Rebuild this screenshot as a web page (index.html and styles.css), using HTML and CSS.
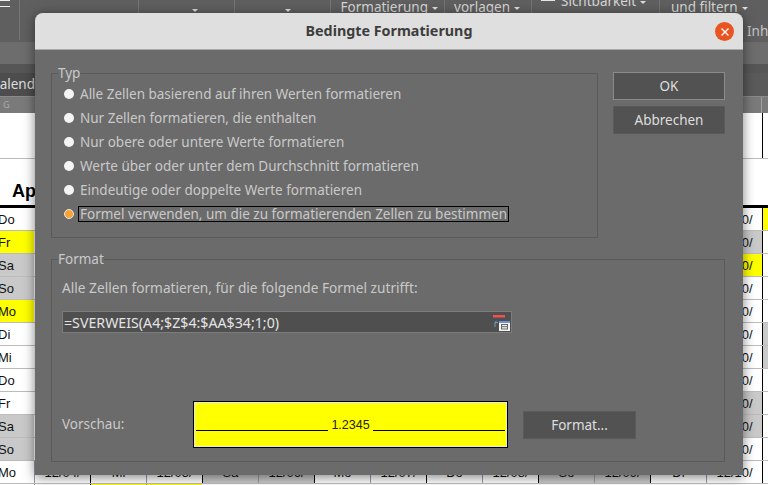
FILE: index.html
```html
<!DOCTYPE html>
<html lang="de">
<head>
<meta charset="utf-8">
<title>Bedingte Formatierung</title>
<link rel="stylesheet" href="styles.css">
</head>
<body>
<div class="app">
  <div class="ribbon">
    <div class="rb rb-a"><span class="burger"></span></div>
    <div class="rb rb-b"></div>
    <div class="rb rb-c"><i class="caret"></i></div>
    <div class="rb rb-d"><i class="caret"></i></div>
    <div class="rb rb-e"><span class="rb-label">Formatierung<i class="caret"></i></span></div>
    <div class="rb rb-f"><span class="rb-label">vorlagen<i class="caret"></i></span></div>
    <div class="rb rb-g"><span class="rb-label rb-clip"><svg class="eye" width="18" height="8" viewBox="0 0 18 8"><path d="M2 5.500h14M4 0l2 4h6l2-4M7 1.500h4" stroke="#e4e4e4" stroke-width="1" fill="none"/><rect x="6" y="0" width="6" height="3" fill="#7a86c8"/></svg>Sichtbarkeit<i class="caret"></i></span></div>
    <div class="rb rb-h"><span class="rb-label">und filtern<i class="caret"></i></span><span class="rb-inh">Inh</span></div>
  </div>
  <div class="bar-light"></div>
  <div class="bar-dark"></div>
  <div class="tabs"><span class="tab">Kalend</span></div>
  <div class="colhead"><span class="colhead-a">G</span><span class="colhead-b"></span></div>
  <div class="sheet-top">
    <div class="blank"><span class="c-end"></span></div>
    <div class="title-row"><span class="month">Apr</span><span class="c-end"></span></div>
  </div>
  <div class="row"><span class="day">Do</span><span class="gap"></span><span class="cell">12/10/</span><span class="tail y"></span></div>
  <div class="row"><span class="day y">Fr</span><span class="gap"></span><span class="cell g">12/10/</span><span class="tail"></span></div>
  <div class="row"><span class="day g">Sa</span><span class="gap"></span><span class="cell y">12/10/</span><span class="tail"></span></div>
  <div class="row"><span class="day g">So</span><span class="gap"></span><span class="cell">12/10/</span><span class="tail"></span></div>
  <div class="row"><span class="day y">Mo</span><span class="gap"></span><span class="cell">12/10/</span><span class="tail"></span></div>
  <div class="row"><span class="day">Di</span><span class="gap"></span><span class="cell">12/10/</span><span class="tail g"></span></div>
  <div class="row"><span class="day">Mi</span><span class="gap"></span><span class="cell">12/10/</span><span class="tail g"></span></div>
  <div class="row"><span class="day">Do</span><span class="gap"></span><span class="cell">12/10/</span><span class="tail"></span></div>
  <div class="row"><span class="day">Fr</span><span class="gap"></span><span class="cell g">12/10/</span><span class="tail"></span></div>
  <div class="row"><span class="day g">Sa</span><span class="gap"></span><span class="cell g">12/10/</span><span class="tail"></span></div>
  <div class="row"><span class="day g">So</span><span class="gap"></span><span class="cell">12/10/</span><span class="tail"></span></div>
  <div class="row"><span class="day">Mo</span>
    <span class="cell">12/04/</span><span class="cell thin">Mi</span>
    <span class="cell">12/05/</span><span class="cell thin g">Sa</span>
    <span class="cell g">12/06/</span><span class="cell thin">Mo</span>
    <span class="cell">12/07/</span><span class="cell thin">Do</span>
    <span class="cell">12/08/</span><span class="cell thin g">So</span>
    <span class="cell g">12/09/</span><span class="cell thin">Di</span>
    <span class="cell">12/10/</span><span class="tail"></span></div>
  <div class="row"><span class="day"></span><span class="cell"></span><span class="cell thin y"></span><span class="cell y"></span></div>
</div>

<div class="dialog">
  <header class="titlebar">
    <h1 class="title">Bedingte Formatierung</h1>
    <span class="close"><svg width="10" height="10" viewBox="0 0 10 10"><path d="M1.5 1.5l7 7M8.500 1.500l-7 7" stroke="#fff" stroke-width="1.400" fill="none"/></svg></span>
  </header>
  <div class="content">
    <div class="top">
      <fieldset class="group group-type">
        <legend class="legend">Typ</legend>
        <label class="radio"><span class="dot"></span><span class="r-text">Alle Zellen basierend auf ihren Werten formatieren</span></label>
        <label class="radio"><span class="dot"></span><span class="r-text">Nur Zellen formatieren, die enthalten</span></label>
        <label class="radio"><span class="dot"></span><span class="r-text">Nur obere oder untere Werte formatieren</span></label>
        <label class="radio"><span class="dot"></span><span class="r-text">Werte über oder unter dem Durchschnitt formatieren</span></label>
        <label class="radio"><span class="dot"></span><span class="r-text">Eindeutige oder doppelte Werte formatieren</span></label>
        <label class="radio"><span class="dot on"></span><span class="r-text focus">Formel verwenden, um die zu formatierenden Zellen zu bestimmen</span></label>
      </fieldset>
      <div class="actions">
        <button class="btn btn-ok">OK</button>
        <button class="btn">Abbrechen</button>
      </div>
    </div>
    <fieldset class="group group-format">
      <legend class="legend">Format</legend>
      <p class="hint">Alle Zellen formatieren, für die folgende Formel zutrifft:</p>
      <div class="formula"><span class="formula-text">=SVERWEIS(A4;$Z$4:$AA$34;1;0)</span>
        <svg class="ref" width="20" height="19" viewBox="0 0 20 19">
          <rect x="2" y="2" width="12" height="2.500" fill="#ef5350"/>
          <path d="M4 14V9.500h3M5.500 8L3.800 9.600" stroke="#5fa8b8" stroke-width="1" fill="none"/>
          <rect x="8" y="8" width="11" height="10" fill="#f4f4f4"/>
          <rect x="8" y="8" width="11" height="2" fill="#6f8fd8"/>
          <rect x="10.500" y="11.500" width="6" height="4.500" fill="none" stroke="#666" stroke-width="1"/>
          <path d="M10.500 13.700h6" stroke="#666" stroke-width="1"/>
        </svg>
      </div>
      <div class="preview-row">
        <span class="preview-label">Vorschau:</span>
        <div class="preview"><span class="pline"></span><span class="pnum">1.2345</span><span class="pline"></span></div>
        <button class="btn btn-format">Format...</button>
      </div>
    </fieldset>
  </div>
</div>
</body>
</html>
```
FILE: styles.css
```css
* { box-sizing: border-box; }
html, body { margin: 0; padding: 0; }
body {
  width: 768px;
  height: 485px;
  overflow: hidden;
  position: relative;
  background: #fff;
  font-family: "Noto Sans", sans-serif;
}

/* background application */
.app { width: 768px; height: 485px; overflow: hidden; display: flex; flex-direction: column; }
.ribbon { height: 43px; flex: none; background: #5f5f5f; display: flex; border-bottom: 1px solid #6d6d6d; }
.rb { position: relative; border-right: 1px solid #757575; height: 40px; flex: none; color: #d6d6d6; font-size: 13.500px; }
.rb-a { width: 20px; }
.rb-b { width: 119px; }
.rb-c { width: 96px; }
.rb-d { width: 96px; }
.rb-e { width: 114px; }
.rb-f { width: 87px; }
.rb-g { width: 128px; }
.rb-h { width: 109px; border-right: 0; }
.burger { display: block; width: 10px; height: 7px; border-top: 1px solid #eee; border-bottom: 1px solid #eee; }
.caret { display: inline-block; border: 3px solid transparent; border-top: 3px solid #ddd; border-bottom: 0; margin-left: 4px; vertical-align: 2px; }
.rb-c .caret { margin: 4px 0 0 53px; }
.rb-d .caret { margin: 4px 0 0 50px; }
.rb-label { display: block; text-align: right; padding-right: 6px; margin-top: -2px; white-space: nowrap; line-height: 18px; }
.rb-f .rb-label { padding-right: 11px; }
.rb-clip { margin-top: -8px; padding-right: 16px; text-align: left; padding-left: 7px; }
.eye { margin-right: 4px; vertical-align: 3px; }
.rb-h .rb-label { text-align: left; padding: 0 0 0 11px; }
.rb-inh { position: absolute; left: 87px; top: 24px; line-height: 14px; color: #c4c4c4; }
.bar-light { height: 21px; background: #6d6d6d; flex: none; }
.bar-dark { height: 9px; background: #565656; flex: none; }
.tabs { height: 23px; background: #5a5a5a; flex: none; }
.tab { display: flex; justify-content: flex-end; width: 35px; height: 23px; background: #4d4d4d; color: #ddd; font-size: 13.500px; line-height: 23px; overflow: hidden; white-space: nowrap; }
.colhead { height: 17px; background: #7a7a7a; flex: none; display: flex; border-top: 1px solid #8a8a8a; }
.colhead-a { width: 762px; color: #aaa; font-size: 9px; line-height: 15px; padding-left: 3px; border-right: 1px solid #a0a0a0; }
.colhead-b { flex: 1; }
.sheet-top { height: 95px; flex: none; display: flex; flex-direction: column; border-bottom: 3px solid #000; }
.blank { height: 46px; border-bottom: 1px solid #bbb; display: flex; justify-content: flex-end; }
.c-end { width: 6px; border-left: 1px solid #000; }
.title-row { flex: 1; display: flex; justify-content: space-between; padding-left: 12px; align-items: center; }
.month { font: bold 18px/22px "Liberation Sans", sans-serif; color: #000; margin-top: 18px; }

.row { height: 23px; flex: none; display: flex; border-bottom: 1px solid #bcbcbc; font: 13px/23px "Liberation Sans", sans-serif; color: #111; }
.day { width: 34px; flex: none; text-indent: -2px; }
.gap { width: 672px; flex: none; }
.cell { width: 56px; flex: none; text-align: center; }
.day + .cell, .cell:not(.thin) { border-left: 1px solid #000; }
.cell.thin { border-left: 1px solid #9a9a9a; }
.day + .cell { border-left-color: #9a9a9a; }
.cell:not(.thin) { border-left-color: #9a9a9a; }
.cell.thin { border-left-color: #000; }
.cell:not(.thin) + .cell.thin { border-left-color: #000; }
.tail { flex: 1; border-left: 1px solid #000; }
.y { background: #ffff00; }
.g { background: #c9c9c9; }

/* dialog */
.dialog {
  position: absolute;
  left: 35px;
  top: 13px;
  width: 708px;
  height: 462px;
  background: #6b6b6b;
  border-radius: 8px 8px 0 0;
  box-shadow: 0 2px 12px rgba(0, 0, 0, .5);
  color: #c9c9c9;
  display: flex;
  flex-direction: column;
}
.titlebar {
  height: 37px;
  flex: none;
  background: #dfdfdf;
  border-bottom: 1px solid #a9a9a9;
  border-radius: 8px 8px 0 0;
  display: flex;
  align-items: center;
  justify-content: center;
  position: relative;
}
.title { margin: 0; font-size: 14.300px; font-weight: 700; color: #3d3d3d; line-height: 36px; }
.close {
  position: absolute;
  right: 9px;
  top: 9px;
  width: 19px;
  height: 19px;
  border-radius: 50%;
  background: #e95420;
  display: flex;
  align-items: center;
  justify-content: center;
}
.content { padding: 15px 18px 0 16px; display: flex; flex-direction: column; flex: 1; }
.top { display: flex; gap: 15px; height: 173px; flex: none; }
.group { margin: 0; padding: 0; border: 1px solid #5a5a5a; min-width: 0; }
.legend { padding: 0; margin-left: 6px; font-size: 13.500px; line-height: 16px; color: #c9c9c9; }
.group-type { width: 547px; padding: 0 0 0 12px; display: flex; flex-direction: column; }
.group-type .legend { margin-left: -6px; }
.radio { height: 24px; display: flex; align-items: center; font-size: 13.500px; flex: none; }
.radio:first-of-type { margin-top: 1px; }
.dot { width: 10px; height: 10px; border-radius: 50%; background: #f4f4f4; flex: none; margin-right: 6px; }
.dot.on { background: #f8a238; border: 1px solid #e9e9e9; }
.r-text { white-space: nowrap; line-height: 16px; }
.focus { border: 1px solid #000; margin-left: -2px; padding: 0 1px; line-height: 14px; }
.actions { display: flex; flex-direction: column; gap: 6px; width: 112px; margin-top: 7px; flex: none; }
.btn {
  height: 28px;
  background: #525252;
  border: 1px solid #5a5a5a;
  color: #dedede;
  font: 13.500px "Noto Sans", sans-serif;
  padding: 0;
}
.btn-ok { border-color: #8b8b8b; }
.group-format { margin-top: 13px; height: 211px; padding: 0 0 0 10px; }
.group-format .legend { margin-left: -4px; }
.hint { margin: 12px 0 0; font-size: 13.700px; line-height: 18px; }
.formula {
  margin-top: 14px;
  width: 450px;
  height: 22px;
  background: #4f4f4f;
  border: 1px solid #7c7c7c;
  color: #e4e4e4;
  display: flex;
  align-items: center;
  justify-content: space-between;
  font-size: 14.200px;
}
.formula-text { padding-left: 1px; }
.ref { flex: none; }
.preview-row { display: flex; align-items: flex-start; margin-top: 68px; }
.preview-label { width: 131px; flex: none; font-size: 13.500px; line-height: 46px; }
.preview {
  width: 315px;
  height: 47px;
  flex: none;
  background: #ffff00;
  border: 1px solid #000;
  outline: 1px solid #e8e8e8;
  outline-offset: -2px;
  display: flex;
  align-items: flex-end;
  gap: 3px;
  padding: 0 2px 16px;
  color: #222;
  font: 12.500px/15px "Liberation Sans", sans-serif;
}
.pline { flex: 1; border-bottom: 1px solid #000; }
.pnum { flex: none; margin-bottom: -2px; }
.btn-format { width: 113px; margin: 10px 0 0 15px; flex: none; }
```
